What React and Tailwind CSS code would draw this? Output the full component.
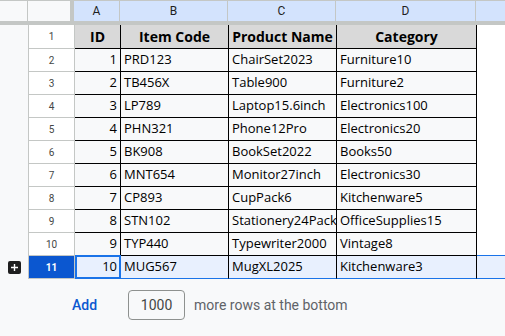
import React from 'react';

const ROWS = [
  [1, 'PRD123', 'ChairSet2023', 'Furniture10'],
  [2, 'TB456X', 'Table900', 'Furniture2'],
  [3, 'LP789', 'Laptop15.6inch', 'Electronics100'],
  [4, 'PHN321', 'Phone12Pro', 'Electronics20'],
  [5, 'BK908', 'BookSet2022', 'Books50'],
  [6, 'MNT654', 'Monitor27inch', 'Electronics30'],
  [7, 'CP893', 'CupPack6', 'Kitchenware5'],
  [8, 'STN102', 'Stationery24Pack', 'OfficeSupplies15'],
  [9, 'TYP440', 'Typewriter2000', 'Vintage8'],
];

const ui = { fontFamily: 'Roboto, "Liberation Sans", sans-serif' };
const cellFont = { fontFamily: '"Open Sans", "Liberation Sans", sans-serif' };

function ColHead({ label, w }) {
  return (
    <div className={`${w} h-full flex items-center justify-center border-r border-[#c4c7c5] text-[12px] text-[#1f1f1f]`}>
      {label}
    </div>
  );
}

function DataRow({ n, id, code, name, cat }) {
  return (
    <div className="flex h-[23px]">
      <div className="w-[28px] shrink-0 bg-[#f8f9fa]" />
      <div className="w-[47px] shrink-0 bg-white border-x border-b border-[#c4c7c5] flex items-center justify-center text-[10px] text-[#444746]" style={ui}>
        {n}
      </div>
      <div style={cellFont} className="flex text-[13px] text-black">
        <div className="w-[46px] shrink-0 border-r border-b border-black flex items-center justify-end pr-[3px]">{id}</div>
        <div className="w-[108px] shrink-0 border-r border-b border-black flex items-center pl-[3px] overflow-hidden whitespace-nowrap">{code}</div>
        <div className="w-[108px] shrink-0 border-r border-b border-black flex items-center pl-[3px] overflow-hidden whitespace-nowrap">{name}</div>
        <div className="w-[140px] shrink-0 border-r border-b border-black flex items-center pl-[3px] overflow-hidden whitespace-nowrap">{cat}</div>
      </div>
      <div className="flex-1 bg-white" />
    </div>
  );
}

export default function App() {
  return (
    <div className="w-[505px] h-[336px] bg-[#f8f9fa] overflow-hidden flex flex-col" style={ui}>
      {/* column headers */}
      <div className="flex h-[21px] border-t border-[#c4c7c5] shrink-0">
        <div className="w-[28px] shrink-0 bg-[#f8f9fa] border-r border-[#c4c7c5]" />
        <div className="w-[46px] shrink-0 bg-[#f8f9fa] border-r-4 border-[#c4c7c5]" />
        <div className="flex flex-1 bg-[#d3e3fd]">
          <ColHead label="A" w="w-[46px]" />
          <ColHead label="B" w="w-[108px]" />
          <ColHead label="C" w="w-[108px]" />
          <ColHead label="D" w="w-[140px]" />
          <div className="flex-1" />
        </div>
      </div>
      <div className="h-[4px] bg-[#c4c7c5] shrink-0" />

      {/* header row 1 */}
      <div className="flex h-[24px] shrink-0">
        <div className="w-[28px] shrink-0 bg-[#f8f9fa]" />
        <div className="w-[47px] shrink-0 bg-white border-x border-b border-[#c4c7c5] flex items-center justify-center text-[10px] text-[#444746]">1</div>
        <div style={cellFont} className="flex text-[14px] font-bold text-black">
          <div className="w-[46px] shrink-0 bg-[#d9d9d9] border-r border-b border-black flex items-center justify-center">ID</div>
          <div className="w-[108px] shrink-0 bg-[#d9d9d9] border-r border-b border-black flex items-center justify-center">Item Code</div>
          <div className="w-[108px] shrink-0 bg-[#d9d9d9] border-r border-b border-black flex items-center justify-center whitespace-nowrap">Product Name</div>
          <div className="w-[140px] shrink-0 bg-[#d9d9d9] border-r border-b border-black flex items-center justify-center">Category</div>
        </div>
        <div className="flex-1 bg-white" />
      </div>

      {ROWS.map((r, i) => (
        <DataRow key={i} n={i + 2} id={r[0]} code={r[1]} name={r[2]} cat={r[3]} />
      ))}

      {/* selected row 11 */}
      <div className="flex h-[23px] shrink-0">
        <div className="w-[28px] shrink-0 bg-[#f8f9fa] flex items-center justify-center">
          <div className="w-[13px] h-[13px] rounded-[2px] bg-[#1f1f1f] text-white flex items-center justify-center">
            <svg width="9" height="9" viewBox="0 0 9 9"><path d="M4.5 1v7M1 4.5h7" stroke="white" strokeWidth="1.4" /></svg>
          </div>
        </div>
        <div className="w-[47px] shrink-0 bg-[#0b57d0] border-x border-b border-[#c4c7c5] flex items-center justify-center text-[10px] font-bold text-white">11</div>
        <div style={cellFont} className="flex text-[13px] text-black bg-[#e8f0fe]">
          <div className="w-[46px] shrink-0 border-2 border-[#1a73e8] -mt-px flex items-center justify-end pr-[2px]">10</div>
          <div className="w-[108px] shrink-0 border-r border-b border-r-black border-b-[#1a73e8] flex items-center pl-[3px]">MUG567</div>
          <div className="w-[108px] shrink-0 border-r border-b border-r-black border-b-[#1a73e8] flex items-center pl-[3px]">MugXL2025</div>
          <div className="w-[140px] shrink-0 border-r border-b border-r-black border-b-[#1a73e8] flex items-center pl-[3px]">Kitchenware3</div>
        </div>
        <div className="flex-1 bg-[#e8f0fe] border-t border-b border-[#1a73e8] -mt-px" />
      </div>

      {/* add rows footer */}
      <div className="flex items-center pt-[11px] pl-[72px] gap-[31px]">
        <span className="text-[14px] font-medium text-[#0b57d0]">Add</span>
        <div className="flex items-center gap-[9px]">
          <div className="w-[57px] h-[30px] rounded-[4px] border border-[#8e918f] flex items-center justify-center text-[14px] text-[#444746]">1000</div>
          <span className="text-[14px] text-[#5f6368]">more rows at the bottom</span>
        </div>
      </div>
    </div>
  );
}
